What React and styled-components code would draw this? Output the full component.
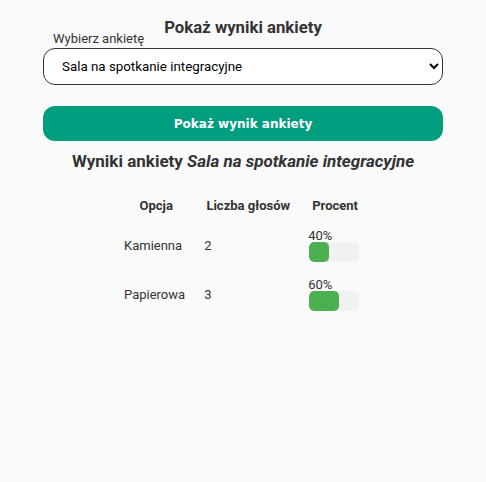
import React from 'react'
import styled, { createGlobalStyle } from 'styled-components'

const results = [
  { option: 'Kamienna', votes: 2, percent: 40 },
  { option: 'Papierowa', votes: 3, percent: 60 },
]

const App = () => {
  return (
    <>
      <GlobalStyle />
      <Container>
        <Title>Pokaż wyniki ankiety</Title>
        <Label htmlFor="survey">Wybierz ankietę</Label>
        <Select id="survey" defaultValue="sala">
          <option value="sala">Sala na spotkanie integracyjne</option>
        </Select>
        <Button>Pokaż wynik ankiety</Button>
        <ResultsTitle>
          Wyniki ankiety <SurveyName>Sala na spotkanie integracyjne</SurveyName>
        </ResultsTitle>
        <Table>
          <thead>
            <tr>
              <Th>Opcja</Th>
              <Th>Liczba głosów</Th>
              <Th>Procent</Th>
            </tr>
          </thead>
          <tbody>
            {results.map((r) => (
              <tr key={r.option}>
                <Td>{r.option}</Td>
                <Td>{r.votes}</Td>
                <Td>
                  <Percent>{r.percent}%</Percent>
                  <Track>
                    <Fill style={{ width: `${r.percent}%` }} />
                  </Track>
                </Td>
              </tr>
            ))}
          </tbody>
        </Table>
      </Container>
    </>
  )
}

export default App

const GlobalStyle = createGlobalStyle`
  html, body {
    margin: 0;
    background: #fafafa;
  }
  body {
    font-family: Roboto, "Liberation Sans", sans-serif;
    color: #333;
    min-height: 482px;
  }
`
const Container = styled.div`
  width: 400px;
  margin: 0 auto;
  padding-top: 18px;
  display: flex;
  flex-direction: column;
`
const Title = styled.h2`
  margin: 0;
  font-size: 16.75px;
  line-height: 19px;
  font-weight: 700;
  text-align: center;
`
const Label = styled.label`
  display: block;
  margin: -6px 0 2px 10px;
  font-size: 13px;
  line-height: 15px;
`
const Select = styled.select`
  height: 37px;
  padding: 0 10px 0 14px;
  border: 1px solid #333;
  border-radius: 12px;
  background: #fff;
  color: #000;
  font-family: Roboto, sans-serif;
  font-size: 13.33px;
`
const Button = styled.button`
  margin-top: 21px;
  height: 35px;
  border: none;
  border-radius: 12px;
  background: #009e7f;
  color: #fff;
  font-family: Verdana, "DejaVu Sans", sans-serif;
  font-size: 12px;
  font-weight: 700;
  cursor: pointer;
`
const ResultsTitle = styled.h3`
  margin: 11px 0 0;
  font-size: 17px;
  line-height: 19px;
  font-weight: 700;
  text-align: center;
`
const SurveyName = styled.em`
  font-weight: 700;
`
const Table = styled.table`
  width: 254px;
  margin: 19px auto 0;
  border-collapse: collapse;
  font-size: 13px;
`
const Th = styled.th`
  padding: 8px;
  font-weight: 700;
  text-align: center;
`
const Td = styled.td`
  padding: 8px;
  text-align: left;
  vertical-align: middle;
`
const Percent = styled.div`
  line-height: 13px;
`
const Track = styled.div`
  width: 50px;
  height: 20px;
  margin-left: 1px;
  border-radius: 5px;
  background: #f1f1f1;
  overflow: hidden;
`
const Fill = styled.div`
  height: 100%;
  border-radius: 5px;
  background: #4caf50;
`
